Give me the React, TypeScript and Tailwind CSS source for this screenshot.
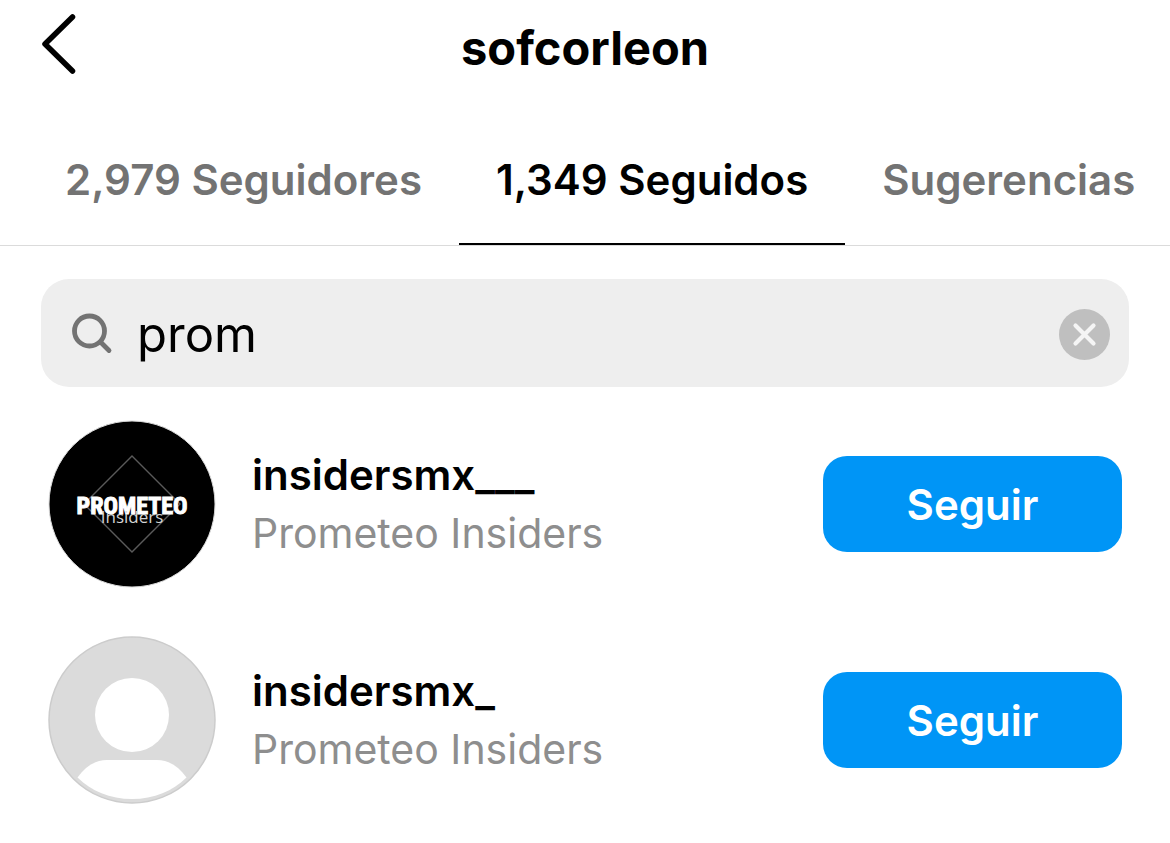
import { useState } from 'react';
import clsx from 'clsx';

type User = { username: string; name: string; avatar: 'prometeo' | 'default' };

const TABS = ['2,979 Seguidores', '1,349 Seguidos', 'Sugerencias'];

const USERS: User[] = [
  { username: 'insidersmx___', name: 'Prometeo Insiders', avatar: 'prometeo' },
  { username: 'insidersmx_', name: 'Prometeo Insiders', avatar: 'default' },
];

function PrometeoAvatar() {
  return (
    <svg className="w-42 h-42 shrink-0" viewBox="0 0 168 168" role="img" aria-label="Prometeo Insiders">
      <circle cx="84" cy="84" r="83" fill="#000" stroke="#dbdbdb" strokeWidth="1" />
      <path d="M84 36L132 84L84 132L36 84Z" fill="none" stroke="#5a5a5a" strokeWidth="1.4" />
      <text
        x="84"
        y="94"
        textAnchor="middle"
        fill="#fff"
        stroke="#fff"
        strokeWidth="1"
        className="font-['Roboto_Condensed','Roboto',sans-serif] text-[24px] font-bold"
      >
        PROMETEO
      </text>
      <text
        x="84"
        y="103"
        textAnchor="middle"
        fill="#d4d4d4"
        className="font-['Open_Sans',sans-serif] text-[17px]"
      >
        Insiders
      </text>
    </svg>
  );
}

function DefaultAvatar() {
  return (
    <svg className="w-42 h-42 shrink-0" viewBox="0 0 168 168" aria-hidden="true">
      <circle cx="84" cy="84" r="83" fill="#dbdbdb" stroke="#cccccc" strokeWidth="1.5" />
      <circle cx="84" cy="79" r="37" fill="#fff" />
      <path d="M29.500 141.500C37 131 47 124 59 124H109C121 124 131 131 138.500 141.500C125 155 106 163 84 163C62 163 43 155 29.500 141.500Z" fill="#fff" />
    </svg>
  );
}

function UserRow({ user }: { user: User }) {
  const [following, setFollowing] = useState(false);

  return (
    <li className="flex items-center py-6">
      {user.avatar === 'prometeo' ? <PrometeoAvatar /> : <DefaultAvatar />}
      <div className="flex-1 min-w-0 pl-9">
        <p className="text-[42px] leading-[58px] font-semibold text-black truncate">{user.username}</p>
        <p className="text-[41px] leading-[58px] text-[#8e8e8e] truncate">{user.name}</p>
      </div>
      <button
        type="button"
        onClick={() => setFollowing(!following)}
        className={clsx(
          'shrink-0 w-[299px] h-24 rounded-3xl text-[42px] font-semibold',
          following ? 'bg-[#efefef] text-black' : 'bg-[#0095f6] text-white'
        )}
      >
        {following ? 'Siguiendo' : 'Seguir'}
      </button>
    </li>
  );
}

export default function App() {
  const [tab, setTab] = useState(1);
  const [query, setQuery] = useState('prom');

  const users = USERS.filter((u) => u.name.toLowerCase().includes(query.toLowerCase()));

  return (
    <div className="min-h-screen bg-white text-black font-['Inter',sans-serif]">
      {/* Header */}
      <header className="grid grid-cols-[1fr_auto_1fr] items-center h-24 px-9">
        <button type="button" aria-label="Atrás" className="justify-self-start -mt-2">
          <svg className="w-11 h-16" viewBox="0 0 44 64" fill="none" stroke="currentColor" strokeWidth="5.500" strokeLinecap="round" strokeLinejoin="round">
            <path d="M36.500 5L9 32L36.500 59" />
          </svg>
        </button>
        <h1 className="text-[47px] leading-[60px] font-bold">sofcorleon</h1>
      </header>

      {/* Tabs */}
      <nav className="flex pl-7 pt-5 border-b border-[#dbdbdb] overflow-hidden">
        {TABS.map((label, i) => (
          <button
            key={label}
            type="button"
            onClick={() => setTab(i)}
            className={clsx(
              'shrink-0 px-[37px] h-[129px] border-b-2 text-[42px] font-semibold whitespace-nowrap',
              i === tab ? 'border-black text-black' : 'border-transparent text-[#737373]'
            )}
          >
            {label}
          </button>
        ))}
      </nav>

      <main className="px-12 pt-[33px]">
        {/* Search */}
        <div className="flex items-center -mx-[7px] h-27 px-7 pt-[3px] rounded-[28px] bg-[#eeeeee]">
          <svg className="w-12 h-12 shrink-0" viewBox="0 0 48 48" fill="none" stroke="#737373" strokeWidth="4.800" strokeLinecap="round" aria-hidden="true">
            <circle cx="20.500" cy="20" r="15" />
            <path d="M31.500 31L40 39.500" />
          </svg>
          <input
            type="text"
            aria-label="Buscar"
            value={query}
            onChange={(e) => setQuery(e.target.value)}
            className="flex-1 min-w-0 pl-5 bg-transparent text-[49px] leading-[60px] outline-none"
          />
          <button type="button" aria-label="Borrar" onClick={() => setQuery('')} className="shrink-0 -mr-[9px]">
            <svg className="w-[51px] h-[51px]" viewBox="0 0 51 51">
              <circle cx="25.500" cy="25.500" r="25.500" fill="#bfbfbf" />
              <path d="M16.500 16.500L34.500 34.500M34.500 16.500L16.500 34.500" stroke="#f5f5f5" strokeWidth="4.200" strokeLinecap="round" />
            </svg>
          </button>
        </div>

        {/* Results */}
        <ul className="pt-[9px]">
          {users.map((u) => (
            <UserRow key={u.username} user={u} />
          ))}
        </ul>
      </main>
    </div>
  );
}
